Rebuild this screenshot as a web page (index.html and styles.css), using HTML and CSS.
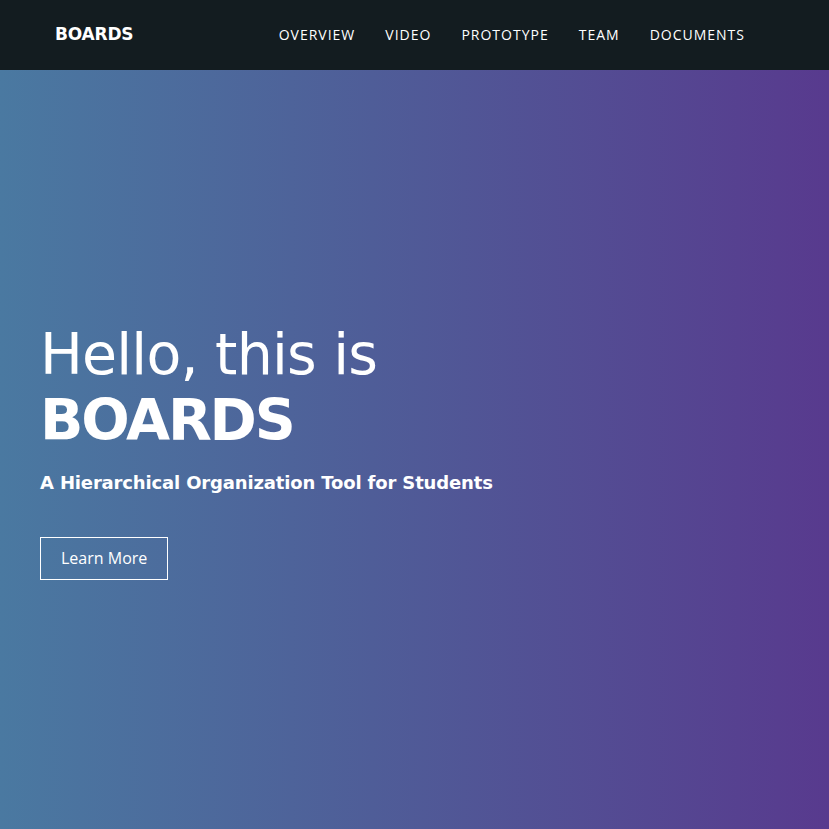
FILE: index.html
```html
<!DOCTYPE html>
<html lang="en">
<head>
<meta charset="utf-8">
<title>BOARDS</title>
<link rel="stylesheet" href="styles.css">
</head>
<body>
<header class="topbar">
  <a class="brand" href="#">BOARDS</a>
  <nav class="menu">
    <a href="#">OVERVIEW</a>
    <a href="#">VIDEO</a>
    <a href="#">PROTOTYPE</a>
    <a href="#">TEAM</a>
    <a href="#">DOCUMENTS</a>
  </nav>
</header>
<main class="hero">
  <div class="hero-content">
    <h1 class="hero-title">Hello, this is<br><strong>BOARDS</strong></h1>
    <p class="hero-sub">A Hierarchical Organization Tool for Students</p>
    <a class="btn" href="#">Learn More</a>
  </div>
</main>
</body>
</html>
```

FILE: styles.css
```css
* { box-sizing: border-box; }
html, body { margin: 0; padding: 0; height: 100%; }
body {
  font-family: "Open Sans", sans-serif;
  background: #4a79a0;
  color: #fff;
}
a { color: #fff; text-decoration: none; }
.topbar {
  height: 70px;
  background: #131c20;
  display: flex;
  align-items: center;
  justify-content: space-between;
  padding: 0 69px 0 56px;
}
.brand {
  font-family: "DejaVu Sans", sans-serif;
  font-weight: 700;
  font-size: 17px;
  letter-spacing: -0.2px;
  margin-top: -2px;
  margin-left: -1px;
}
.menu {
  display: flex;
  gap: 0;
}
.menu a {
  font-size: 14px;
  letter-spacing: 1px;
  padding: 0 15px;
  margin-top: -2px;
}
.hero {
  height: calc(100% - 70px);
  background: linear-gradient(to right, #4a79a1 0%, #4f5d98 45%, #583a8e 100%);
  display: flex;
  align-items: center;
  padding: 0 40px;
}
.hero-content { margin-top: 2px; }
.hero-title {
  font-family: "DejaVu Sans", sans-serif;
  font-weight: 400;
  font-size: 57px;
  line-height: 66px;
  letter-spacing: -0.8px;
  margin: 0;
}
.hero-title strong { font-weight: 700; letter-spacing: -2.2px; }
.hero-sub {
  font-family: "DejaVu Sans", sans-serif;
  font-weight: 700;
  font-size: 18px;
  letter-spacing: -0.15px;
  margin: 19px 0 0;
}
.btn {
  display: inline-block;
  margin-top: 44px;
  border: 1px solid #fff;
  padding: 10px 20px;
  font-size: 16px;
  line-height: 21px;
}
```
